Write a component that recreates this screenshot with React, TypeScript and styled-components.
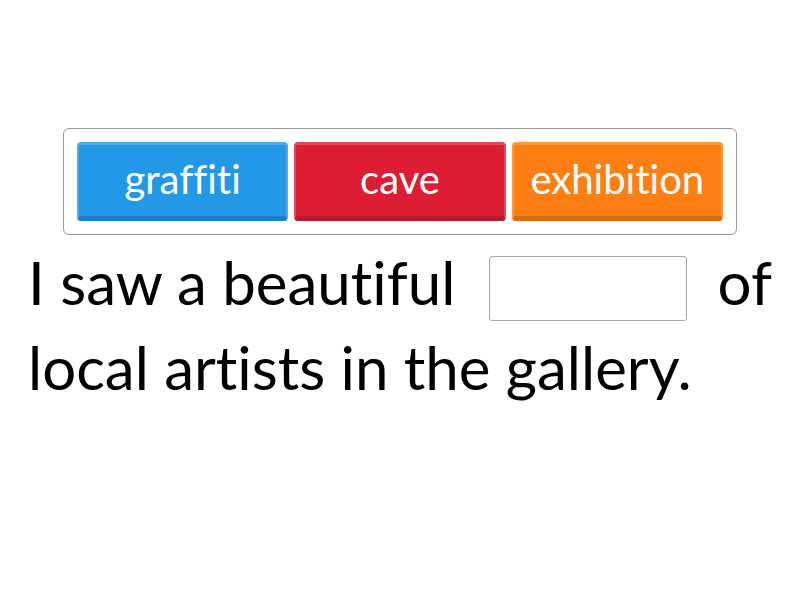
import styled, { createGlobalStyle } from 'styled-components';

const GlobalStyle = createGlobalStyle`
  body {
    margin: 0;
    background: #fff;
    font-family: Lato, "Open Sans", sans-serif;
    font-variant-ligatures: none;
  }
`;

const tiles = [
  { label: 'graffiti', base: '#2398e6', light: '#4badf0', dark: '#1a80cc' },
  { label: 'cave', base: '#dc1d33', light: '#e4465a', dark: '#b51a2e' },
  { label: 'exhibition', base: '#fd7f14', light: '#fe983f', dark: '#db6a0c' },
];

export default function App() {
  return (
    <>
      <GlobalStyle />
      <Page>
        <Bank>
          {tiles.map((t) => (
            <Tile key={t.label} $base={t.base} $light={t.light} $dark={t.dark}>
              {t.label}
            </Tile>
          ))}
        </Bank>
        <Sentence>
          <FirstLine>
            <span>I saw a beautiful</span>
            <Blank />
            <span>of</span>
          </FirstLine>
          <Line>local artists in the gallery.</Line>
        </Sentence>
      </Page>
    </>
  );
}

const Page = styled.div`
  width: 800px;
  height: 600px;
  padding-top: 128px;
  box-sizing: border-box;
  display: flex;
  flex-direction: column;
  align-items: center;
`;

const Bank = styled.div`
  width: 674px;
  box-sizing: border-box;
  border: 1px solid #9a9a9a;
  border-radius: 6px;
  padding: 13px;
  display: flex;
  gap: 6px;
`;

const Tile = styled.div<{ $base: string; $light: string; $dark: string }>`
  flex: 1;
  height: 79px;
  box-sizing: border-box;
  border-radius: 4px;
  background: ${(p) => p.$base};
  border-top: 3px solid ${(p) => p.$light};
  border-left: 2px solid ${(p) => p.$light};
  border-right: 2px solid ${(p) => p.$light};
  border-bottom: 5px solid ${(p) => p.$dark};
  color: #fff;
  font-size: 40px;
  display: flex;
  align-items: center;
  justify-content: center;
  padding-bottom: 4px;
`;

const Sentence = styled.div`
  width: 744px;
  margin-top: 5px;
  color: #000;
  font-size: 60px;
  line-height: 85px;
`;

const Line = styled.div`
  height: 85px;
  white-space: nowrap;
`;

const FirstLine = styled(Line)`
  display: flex;
  align-items: baseline;
  justify-content: space-between;
`;

const Blank = styled.div`
  display: inline-block;
  width: 198px;
  height: 65px;
  box-sizing: border-box;
  border: 1px solid #a8a8a8;
  border-radius: 3px;
  background: #fff;
  margin-left: 4px;
  position: relative;
  top: 16px;
`;
